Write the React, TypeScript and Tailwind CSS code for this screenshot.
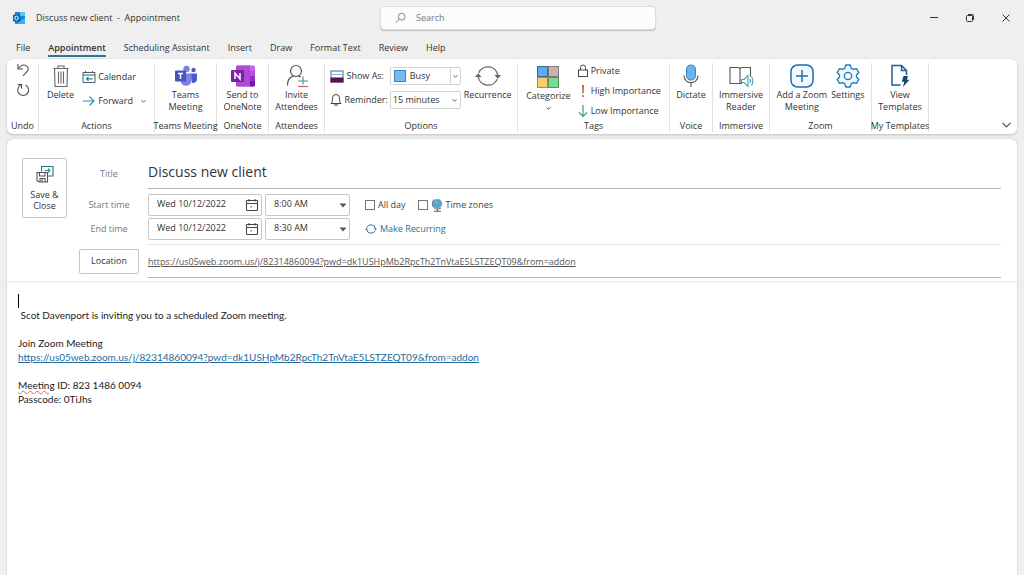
import React from 'react';
import type { ReactNode } from 'react';

const URL_TEXT =
  'https://us05web.zoom.us/j/82314860094?pwd=dk1USHpMb2RpcTh2TnVtaE5LSTZEQT09&from=addon';

/* ---------- icons ---------- */

function OutlookIcon() {
  return (
    <svg width="14" height="14" viewBox="0 0 14 14" aria-hidden="true">
      <rect x="3" y="1" width="10" height="12" rx="0.8" fill="#1488d8" />
      <rect x="8" y="1" width="5" height="4" fill="#50c8f0" />
      <rect x="3" y="1" width="5" height="4" fill="#1f7fc8" />
      <path d="M13 6.500v5.700a.8.800 0 0 1-.8.800H5z" fill="#38b4ee" />
      <rect x="1" y="3.500" width="7" height="7" rx="0.8" fill="#0f5fae" />
      <ellipse cx="4.500" cy="7" rx="1.700" ry="1.900" fill="none" stroke="#fff" strokeWidth="1" />
    </svg>
  );
}

function SearchIcon() {
  return (
    <svg width="12" height="12" viewBox="0 0 12 12" fill="none" stroke="#777" strokeWidth="1" aria-hidden="true">
      <circle cx="7.300" cy="4.500" r="3.700" />
      <path d="M4.600 7.200L0.700 11.200" />
    </svg>
  );
}

function UndoIcon() {
  return (
    <svg width="14" height="14" viewBox="0 0 14 14" fill="none" stroke="#555" strokeWidth="1.100" aria-hidden="true">
      <path d="M2 1v5h5" />
      <path d="M2.300 5.600C4.500 2.700 7 1.500 9.300 2.200c2.500.8 3.600 3.500 2.300 5.700L7 12.800" />
    </svg>
  );
}

function RedoIcon() {
  return (
    <svg width="14" height="14" viewBox="0 0 14 14" fill="none" stroke="#555" strokeWidth="1.100" aria-hidden="true">
      <path d="M1.500 1.500H5.500V5.500" />
      <path d="M5.300 1.800A5.500 5.500 0 1 0 9.500 2" />
    </svg>
  );
}

function TrashIcon() {
  return (
    <svg width="18" height="24" viewBox="0 0 18 24" fill="none" stroke="#666" strokeWidth="1.100" aria-hidden="true">
      <path d="M1.500 4.500h15M6 4.500V2h6v2.500M2.500 4.500l.5 18h12l.5-18M6.500 7.500v12M9 7.500v12M11.500 7.500v12" />
    </svg>
  );
}

function CalendarArrowIcon() {
  return (
    <svg width="14" height="12" viewBox="0 0 14 12" fill="none" stroke="#4b5a66" strokeWidth="1" aria-hidden="true">
      <path d="M1 1.500h12v10H1zM1 4h12M3.500 0v2M10.500 0v2" />
      <path d="M10.500 7.800H4.500M6.500 5.800l-2 2 2 2" stroke="#1c7fb0" strokeWidth="1.200" />
    </svg>
  );
}

function ForwardIcon() {
  return (
    <svg width="14" height="12" viewBox="0 0 14 12" fill="none" stroke="#2b8fb8" strokeWidth="1.100" aria-hidden="true">
      <path d="M1 6h11M7.500 1.500L12 6l-4.500 4.500" />
    </svg>
  );
}

function TeamsIcon() {
  return (
    <svg width="24" height="22" viewBox="0 0 24 22" aria-hidden="true">
      <circle cx="19.500" cy="5" r="2.200" fill="#5059c9" />
      <circle cx="12.500" cy="4" r="3.200" fill="#7b83eb" />
      <path d="M16 8.500h6.200a.8.800 0 0 1 .8.800v5a3.700 3.700 0 0 1-5 3.500z" fill="#5059c9" />
      <path d="M8 8.500h9.500v7a5.500 5.500 0 0 1-10.500 2z" fill="#7b83eb" />
      <rect x="1" y="5.500" width="11" height="11" rx="1" fill="#4b53bc" />
      <path d="M4 8.500h5M6.500 8.500V14" stroke="#fff" strokeWidth="1.400" />
    </svg>
  );
}

function OneNoteIcon() {
  return (
    <svg width="26" height="22" viewBox="0 0 26 22" aria-hidden="true">
      <rect x="6" y="0.500" width="19" height="21" rx="1.500" fill="#ca64ea" />
      <path d="M6 2a1.500 1.500 0 0 1 1.500-1.500H20v21H7.500A1.500 1.500 0 0 1 6 20z" fill="#ae4bd5" />
      <path d="M20 6h5v5h-5z" fill="#b052d8" />
      <path d="M20 11h5v5h-5z" fill="#9332bf" />
      <path d="M20 16h5v4a1.500 1.500 0 0 1-1.500 1.500H20z" fill="#7719aa" />
      <rect x="1" y="5" width="13" height="12" rx="1" fill="#7a1fa8" />
      <path d="M5 14V8l5 6V8" fill="none" stroke="#fff" strokeWidth="1.500" />
    </svg>
  );
}

function InviteIcon() {
  return (
    <svg width="24" height="24" viewBox="0 0 24 24" fill="none" stroke="#555" strokeWidth="1.200" aria-hidden="true">
      <circle cx="11" cy="7" r="5.500" />
      <path d="M2.500 21.500c0-5.500 2.500-8.500 6-9.300M13.500 12.200c1 .2 1.700.6 2.300 1" />
      <path d="M13 17h10M18 12.500v8" stroke="#3d9c8b" />
      <path d="M13 22.500h10" stroke="#d05b66" />
    </svg>
  );
}

function ShowAsIcon() {
  return (
    <svg width="14" height="13" viewBox="0 0 14 13" aria-hidden="true">
      <rect x="1" y="1" width="12" height="11" fill="#fff" stroke="#3d6f94" />
      <path d="M1.500 4.500h11" stroke="#7db7da" />
      <rect x="0.500" y="7.500" width="13" height="5" fill="#5c1245" />
    </svg>
  );
}

function BellIcon() {
  return (
    <svg width="12" height="14" viewBox="0 0 12 14" fill="none" stroke="#444" strokeWidth="1" aria-hidden="true">
      <path d="M1 10.500c1-1 1.500-2 1.500-5.500a3.500 3.500 0 0 1 7 0c0 3.500.5 4.500 1.500 5.500zM4.500 11a1.500 1.500 0 0 0 3 0" />
    </svg>
  );
}

function RecurIcon({ size, color, width }: { size: number; color: string; width: number }) {
  return (
    <svg width={size} height={size} viewBox="0 0 24 24" fill="none" stroke={color} strokeWidth={width} aria-hidden="true">
      <path d="M3.500 9A9.200 9.200 0 0 1 21 11.500M20.500 15A9.200 9.200 0 0 1 3 12.500" />
      <path d="M21 14.500l-3-3.500h6zM3 9.500L6 13H0z" fill={color} stroke="none" />
    </svg>
  );
}

function CategorizeIcon() {
  return (
    <svg width="22" height="22" viewBox="0 0 22 22" strokeWidth="1" aria-hidden="true">
      <rect x="0.500" y="0.500" width="10" height="10" fill="#62aaf0" stroke="#34699b" />
      <rect x="11.500" y="0.500" width="10" height="10" fill="#c4b4b6" stroke="#85787b" />
      <rect x="0.500" y="11.500" width="10" height="10" fill="#ffcb65" stroke="#b8883d" />
      <rect x="11.500" y="11.500" width="10" height="10" fill="#78dc91" stroke="#4b9b60" />
    </svg>
  );
}

function LockIcon() {
  return (
    <svg width="12" height="14" viewBox="0 0 12 14" fill="none" stroke="#444" strokeWidth="1" aria-hidden="true">
      <rect x="1.500" y="6" width="9" height="6.500" />
      <path d="M3.500 6V3.500a2.500 2.500 0 0 1 5 0V6" />
    </svg>
  );
}

function HighIcon() {
  return (
    <svg width="12" height="14" viewBox="0 0 12 14" fill="#cf5a2c" aria-hidden="true">
      <path d="M5 1h2L6.600 9.500H5.400z" />
      <circle cx="6" cy="12" r="1" />
    </svg>
  );
}

function LowIcon() {
  return (
    <svg width="12" height="14" viewBox="0 0 12 14" fill="none" stroke="#3b9b87" strokeWidth="1.200" aria-hidden="true">
      <path d="M6 1v11.500M2 8.500l4 4 4-4" />
    </svg>
  );
}

function MicIcon() {
  return (
    <svg width="16" height="24" viewBox="0 0 16 24" fill="none" aria-hidden="true">
      <rect x="3.500" y="1" width="9" height="15" rx="4.200" fill="#6db3ee" stroke="#3a80bd" />
      <path d="M1 11.500c0 9.500 14 9.500 14 0M8 18.700V23" stroke="#555" strokeWidth="1.100" />
    </svg>
  );
}

function ReaderIcon() {
  return (
    <svg width="26" height="24" viewBox="0 0 26 24" fill="none" stroke="#555" strokeWidth="1.100" aria-hidden="true">
      <path d="M14 19.500H2v-16h8.500l1.500 1 1.500-1H22.500v9M12 4.500V19.500" />
      <path d="M13.500 15.500h2.500l4-4v11l-4-4h-2.500z" fill="#fff" stroke="#4ba0b4" />
      <path d="M21.800 15c.8 1 .8 3 0 4M23.500 12.500c1.800 2.500 1.800 6.500 0 9" stroke="#4ba0b4" />
    </svg>
  );
}

function ZoomAddIcon() {
  return (
    <svg width="24" height="24" viewBox="0 0 24 24" fill="none" stroke="#1d6dae" strokeWidth="1.500" aria-hidden="true">
      <rect x="1" y="1" width="22" height="22" rx="6.500" fill="#f1f8fe" />
      <path d="M12 6v12M6 12h12" />
    </svg>
  );
}

function GearIcon() {
  return (
    <svg width="24" height="24" viewBox="0 0 24 24" fill="none" stroke="#1d78b0" strokeWidth="1.300" aria-hidden="true">
      <path
        d="M9.800 1h4.400l.9 3.200 2.100 1.200 3.300-.8 2.300 3.900L20.500 11v2l2.300 2.500-2.300 3.900-3.300-.8-2.100 1.200-.9 3.200H9.800l-.9-3.200-2.100-1.200-3.300.8-2.300-3.900L3.500 13v-2L1.200 8.500l2.300-3.900 3.300.8 2.100-1.200z"
        fill="#f1f8fe"
        strokeLinejoin="round"
      />
      <circle cx="12" cy="12" r="3.700" />
    </svg>
  );
}

function TemplatesIcon() {
  return (
    <svg width="20" height="24" viewBox="0 0 20 24" fill="none" stroke="#1f5d92" strokeWidth="1.500" aria-hidden="true">
      <path d="M10.500 21H2V1.500h9.500L16.500 6.500v4.500M11.500 1.500v5h5" />
      <path d="M13.500 12h4.500l-1.200 3.700H19.500l-6.500 7.300 1.300-5.200h-2.500z" fill="#16436e" stroke="none" />
    </svg>
  );
}

function SaveCloseIcon() {
  return (
    <svg width="18" height="18" viewBox="0 0 18 18" fill="none" stroke="#555" strokeWidth="1.100" aria-hidden="true">
      <path d="M5.500 6.500V1.500H17v9.500h-5" stroke="#3e6475" />
      <path d="M8.500 5.500H14M12 3.500l2 2-2 2" stroke="#2391a8" />
      <path d="M1 7.500h10.500v9.500H3L1 15.500zM3.500 7.500v3.500h5.500V7.500M4 17v-3.500h5V17M6 14v3" fill="#fff" />
    </svg>
  );
}

function DateIcon() {
  return (
    <svg width="12" height="12" viewBox="0 0 12 12" fill="none" stroke="#444" strokeWidth="1" aria-hidden="true">
      <path d="M0.500 1.500h11v10H0.500zM0.500 4.500h11M3 0v2.500M9 0v2.500" />
      <path d="M4.500 8h1.500" />
    </svg>
  );
}

function GlobeIcon() {
  return (
    <svg width="12" height="14" viewBox="0 0 12 14" fill="none" aria-hidden="true">
      <circle cx="6.500" cy="5.800" r="4.700" fill="#5ba4cb" />
      <path d="M4 4l2-1 1 1-1.500 2z" fill="#7dbdbb" />
      <path d="M3 1.500c-3 3.500-1.500 8 1.500 9.300 2.500.8 4.500 0 5.500-1M6.500 11v2M3 13.300h7" stroke="#53636d" />
    </svg>
  );
}

function Chevron() {
  return (
    <svg width="5" height="3" viewBox="0 0 5 3" fill="none" stroke="#555" aria-hidden="true">
      <path d="M0.500 0.300L2.500 2.300l2-2" />
    </svg>
  );
}

/* ---------- ribbon parts ---------- */

function Group({ label, className, children }: { label: string; className: string; children: ReactNode }) {
  return (
    <section
      aria-label={label}
      className={`flex shrink-0 flex-col items-center border-r border-[#e0e0e0] ${className}`}
    >
      <div className="flex h-14 w-full justify-center">{children}</div>
      <div className="mt-px whitespace-nowrap leading-3">{label}</div>
    </section>
  );
}

function BigButton({ icon, lines, children }: { icon: ReactNode; lines: string[]; children?: ReactNode }) {
  return (
    <button type="button" className="flex flex-col items-center whitespace-nowrap leading-3">
      <span className="flex h-[26px] items-center">{icon}</span>
      {lines.map((l) => (
        <span key={l}>{l}</span>
      ))}
      {children}
    </button>
  );
}

function SmallButton({ icon, label, children }: { icon: ReactNode; label: string; children?: ReactNode }) {
  return (
    <button type="button" className="flex items-center gap-0.5 whitespace-nowrap leading-3">
      {icon}
      <span>{label}</span>
      {children}
    </button>
  );
}

function Ribbon() {
  return (
    <div className="mx-[7px] flex rounded-md bg-white pb-0.5 pt-1 shadow-[0_1px_3px_rgba(0,0,0,0.2)]">
      <Group label="Undo" className="w-8">
        <div className="flex flex-col gap-1.5">
          <button type="button" aria-label="Undo"><UndoIcon /></button>
          <button type="button" aria-label="Redo"><RedoIcon /></button>
        </div>
      </Group>

      <Group label="Actions" className="w-[116px]">
        <div className="flex items-start gap-2">
          <BigButton icon={<TrashIcon />} lines={['Delete']} />
          <div className="flex flex-col gap-3 pt-2">
            <SmallButton icon={<CalendarArrowIcon />} label="Calendar" />
            <SmallButton icon={<ForwardIcon />} label="Forward">
              <span className="pl-1.5"><Chevron /></span>
            </SmallButton>
          </div>
        </div>
      </Group>

      <Group label="Teams Meeting" className="w-[62px]">
        <BigButton icon={<TeamsIcon />} lines={['Teams', 'Meeting']} />
      </Group>

      <Group label="OneNote" className="w-[52px]">
        <BigButton icon={<OneNoteIcon />} lines={['Send to', 'OneNote']} />
      </Group>

      <Group label="Attendees" className="w-14">
        <BigButton icon={<InviteIcon />} lines={['Invite', 'Attendees']} />
      </Group>

      <Group label="Options" className="w-[193px]">
        <div className="flex items-start gap-[3px]">
          <div className="grid grid-cols-[auto_71px] items-center gap-x-0.5 gap-y-1.5 pt-1">
            <label htmlFor="show-as" className="flex items-center gap-0.5 whitespace-nowrap">
              <ShowAsIcon />
              Show As:
            </label>
            <div className="relative flex h-[18px] items-center rounded-xs border border-[#d4d4d4]">
              <span className="ml-[3px] size-3 shrink-0 border border-[#4682b0] bg-[#74b9f2]" />
              <select id="show-as" className="h-full w-full appearance-none pl-1 outline-none">
                <option>Busy</option>
              </select>
              <span className="pointer-events-none absolute inset-y-0 right-0 flex w-2.5 items-center justify-center border-l border-[#d4d4d4]">
                <Chevron />
              </span>
            </div>
            <label htmlFor="reminder" className="flex items-center gap-0.5 whitespace-nowrap">
              <BellIcon />
              Reminder:
            </label>
            <div className="relative flex h-[18px] items-center rounded-xs border border-[#d4d4d4]">
              <select id="reminder" className="h-full w-full appearance-none pl-0.5 outline-none">
                <option>15 minutes</option>
              </select>
              <span className="pointer-events-none absolute inset-y-0 right-0 flex w-2.5 items-center justify-center">
                <Chevron />
              </span>
            </div>
          </div>
          <BigButton icon={<RecurIcon size={26} color="#666" width={1.2} />} lines={['Recurrence']} />
        </div>
      </Group>

      <Group label="Tags" className="w-[152px]">
        <div className="flex items-start gap-1.5 pt-px">
          <BigButton icon={<CategorizeIcon />} lines={['Categorize']}>
            <span className="flex h-3 items-center"><Chevron /></span>
          </BigButton>
          <div className="flex flex-col gap-1.5">
            <SmallButton icon={<LockIcon />} label="Private" />
            <SmallButton icon={<HighIcon />} label="High Importance" />
            <SmallButton icon={<LowIcon />} label="Low Importance" />
          </div>
        </div>
      </Group>

      <Group label="Voice" className="w-[43px]">
        <BigButton icon={<MicIcon />} lines={['Dictate']} />
      </Group>

      <Group label="Immersive" className="w-[57px]">
        <BigButton icon={<ReaderIcon />} lines={['Immersive', 'Reader']} />
      </Group>

      <Group label="Zoom" className="w-[102px]">
        <div className="flex items-start gap-1">
          <BigButton icon={<ZoomAddIcon />} lines={['Add a Zoom', 'Meeting']} />
          <BigButton icon={<GearIcon />} lines={['Settings']} />
        </div>
      </Group>

      <Group label="My Templates" className="w-[57px]">
        <BigButton icon={<TemplatesIcon />} lines={['View', 'Templates']} />
      </Group>

      <button type="button" aria-label="Collapse ribbon" className="mb-1 ml-auto mr-1.5 self-end">
        <svg width="9" height="6" viewBox="0 0 9 6" fill="none" stroke="#555" strokeWidth="1.200" aria-hidden="true">
          <path d="M0.500 0.800l4 4 4-4" />
        </svg>
      </button>
    </div>
  );
}

/* ---------- title bar and tabs ---------- */

function TitleBar() {
  return (
    <header className="grid h-9 grid-cols-[1fr_276px_1fr] items-center pl-3">
      <div className="flex items-center gap-2.5">
        <OutlookIcon />
        <h1>Discuss new client&nbsp; -&nbsp; Appointment</h1>
      </div>
      <label className="flex h-6 items-center gap-2.5 rounded-sm border border-[#dcdcdc] bg-[#fcfcfc] pl-3.5 shadow-[0_1px_1px_rgba(0,0,0,0.2)]">
        <SearchIcon />
        <input
          type="search"
          aria-label="Search"
          placeholder="Search"
          className="w-full bg-transparent text-[9px] outline-none placeholder:text-[#777]"
        />
      </label>
      <div className="flex justify-end">
        <button type="button" aria-label="Minimize" className="flex h-9 w-9 items-center justify-center">
          <svg width="8" height="8" viewBox="0 0 8 8" stroke="#333" aria-hidden="true"><path d="M0 3.500h8" /></svg>
        </button>
        <button type="button" aria-label="Restore" className="flex h-9 w-9 items-center justify-center">
          <svg width="8" height="8" viewBox="0 0 8 8" fill="none" stroke="#333" aria-hidden="true">
            <rect x="0.500" y="1.500" width="6" height="6" rx="1" />
            <path d="M2 0.500h4a1.500 1.500 0 0 1 1.500 1.500v4" />
          </svg>
        </button>
        <button type="button" aria-label="Close" className="flex h-9 w-9 items-center justify-center">
          <svg width="8" height="8" viewBox="0 0 8 8" stroke="#333" aria-hidden="true"><path d="M0.500 0.500l7 7M7.500 0.500l-7 7" /></svg>
        </button>
      </div>
    </header>
  );
}

const TABS = ['File', 'Appointment', 'Scheduling Assistant', 'Insert', 'Draw', 'Format Text', 'Review', 'Help'];

function Tabs() {
  return (
    <nav aria-label="Ribbon tabs" className="flex h-[23px] items-center gap-[18px] px-4 pt-[3px]">
      {TABS.map((t) => (
        <button
          key={t}
          type="button"
          className={
            t === 'Appointment'
              ? 'border-b-2 border-[#2b7a9b] font-semibold leading-[14px]'
              : 'border-b-2 border-transparent leading-[14px]'
          }
        >
          {t}
        </button>
      ))}
    </nav>
  );
}

/* ---------- appointment form ---------- */

function TimeRow({ id, label, time, children }: { id: string; label: string; time: string; children: ReactNode }) {
  return (
    <>
      <label htmlFor={id} className="text-center text-[#777]">{label}</label>
      <div className="flex items-center gap-[3px]">
        <div className="flex h-[22px] w-[114px] items-center rounded-xs border border-[#c6c6c6] pl-2 pr-[3px]">
          <input id={id} type="text" defaultValue="Wed 10/12/2022" className="h-full min-w-0 flex-1 pb-[3px] outline-none" />
          <button type="button" aria-label={`Pick ${label.toLowerCase()} date`}><DateIcon /></button>
        </div>
        <div className="relative h-[22px] w-[85px] rounded-xs border border-[#c6c6c6]">
          <select aria-label={label} className="h-full w-full appearance-none pb-[3px] pl-2 outline-none">
            <option>{time}</option>
          </select>
          <svg width="8" height="5" viewBox="0 0 8 5" fill="#555" className="pointer-events-none absolute right-0.5 top-2" aria-hidden="true">
            <path d="M0.500 0.500h7L4 4.500z" />
          </svg>
        </div>
        <div className="flex items-center pl-3">{children}</div>
      </div>
    </>
  );
}

function Check({ label, icon }: { label: string; icon?: ReactNode }) {
  return (
    <label className="flex items-center gap-[3px] text-[#444]">
      <input type="checkbox" className="size-2.5 appearance-none border border-[#777] bg-white" />
      {icon}
      {label}
    </label>
  );
}

function Form() {
  return (
    <form className="flex items-start gap-3 border-b-2 border-[#f1f1f1] pb-[3px] pl-[15px] pr-4 pt-[19px]">
      <button
        type="button"
        className="flex h-[60px] w-[45px] shrink-0 flex-col items-center rounded-xs border border-[#c6c6c6] pt-1.5 leading-[11px]"
      >
        <SaveCloseIcon />
        <span className="mt-1.5">Save &amp;</span>
        <span>Close</span>
      </button>
      <div className="grid flex-1 grid-cols-[60px_1fr] items-center gap-x-[9px]">
        <label htmlFor="title" className="pb-1 text-center text-[#777]">Title</label>
        <input
          id="title"
          type="text"
          defaultValue="Discuss new client"
          className="mb-[5px] h-[31px] w-full border-b border-[#b4b4b4] pb-1 text-[14px] outline-none"
        />
        <TimeRow id="start" label="Start time" time="8:00 AM">
          <div className="flex gap-3">
            <Check label="All day" />
            <Check label="Time zones" icon={<GlobeIcon />} />
          </div>
        </TimeRow>
        <div className="col-span-2 h-0.5" />
        <TimeRow id="end" label="End time" time="8:30 AM">
          <button type="button" className="flex items-center gap-[3px] text-[#1f7397]">
            <RecurIcon size={12} color="#1f7397" width={2} />
            Make Recurring
          </button>
        </TimeRow>
        <button type="button" className="mt-1 h-[25px] rounded-xs border border-[#c6c6c6]">Location</button>
        <input
          type="text"
          aria-label="Location"
          defaultValue={URL_TEXT}
          className="mt-1 h-[34px] w-full border-b border-t border-b-[#b4b4b4] border-t-[#e6e6e6] text-[#555] underline outline-none"
        />
      </div>
    </form>
  );
}

function Body() {
  return (
    <article className="px-[11px] pt-[11px] font-['Lato',sans-serif] text-[10px] leading-[14px] text-[#222]">
      <div className="h-3.5 w-px bg-black" />
      <p>&nbsp;Scot Davenport is inviting you to a scheduled Zoom meeting.</p>
      <p className="mt-3.5">Join Zoom Meeting</p>
      <p>
        <a href={URL_TEXT} className="text-[#1f6a9c] underline">{URL_TEXT}</a>
      </p>
      <p className="mt-3.5">
        <span className="underline decoration-[#d66] decoration-wavy decoration-1">Meeting</span> ID: 823 1486 0094
      </p>
      <p>Passcode: 0TiJhs</p>
    </article>
  );
}

export default function App() {
  return (
    <div className="flex min-h-screen flex-col bg-[#efefef] font-['Open_Sans','Noto_Sans',sans-serif] text-[9px] text-[#333]">
      <TitleBar />
      <Tabs />
      <Ribbon />
      <main className="mx-[7px] mt-[5px] flex-1 rounded-t-md bg-white shadow-[0_0_2px_rgba(0,0,0,0.25)]">
        <Form />
        <Body />
      </main>
    </div>
  );
}
